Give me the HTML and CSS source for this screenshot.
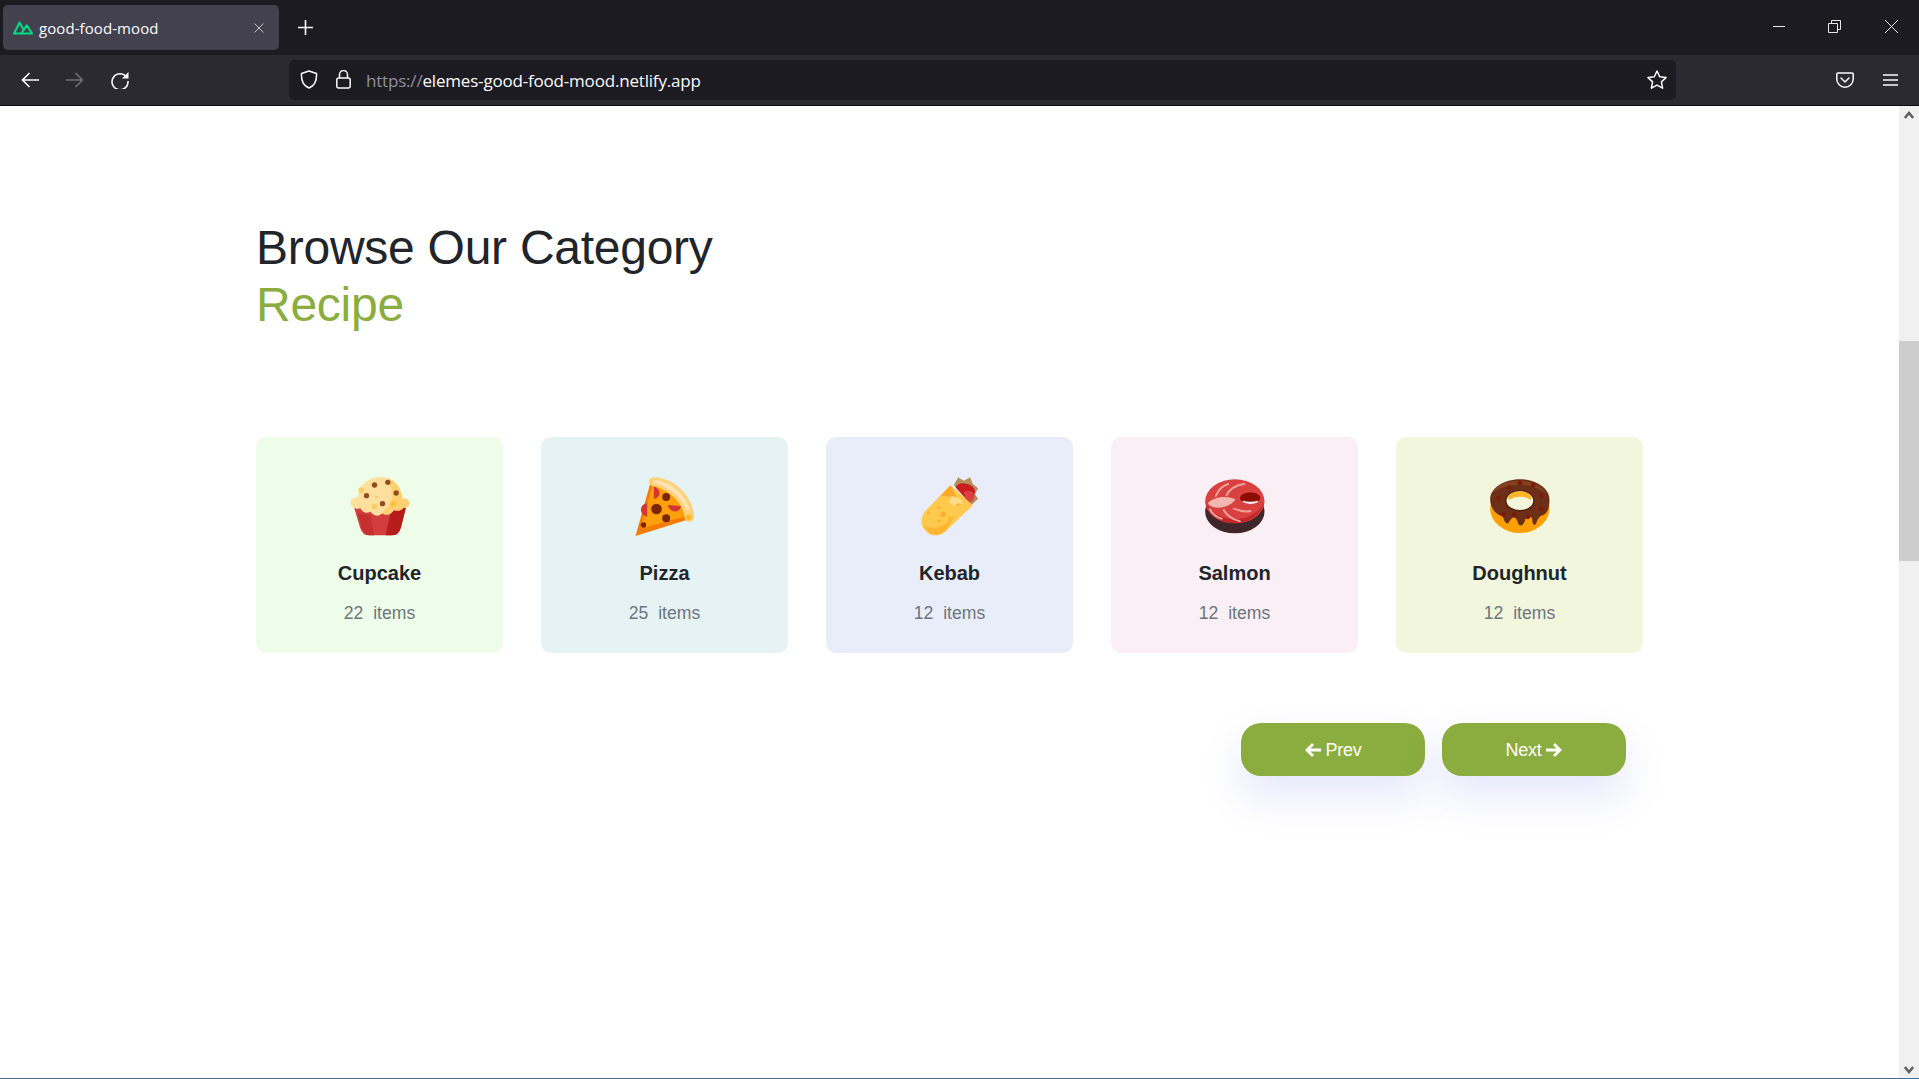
FILE: index.html
```html
<!DOCTYPE html>
<html lang="en">
<head>
<meta charset="utf-8">
<title>good-food-mood</title>
<link rel="stylesheet" href="styles.css">
</head>
<body>
<div class="browser">
  <header class="tabbar">
    <div class="tab">
      <svg class="favicon" viewBox="40 65 58 40" fill="none" stroke="#00dc82" stroke-width="6" stroke-linejoin="round"><path d="M64 101H43L59 69L72 92"/><path d="M64 101L80 77L95 101Z"/></svg>
      <span class="tab-title">good-food-mood</span>
      <svg class="tab-close" viewBox="0 0 10 10" stroke="#c4c4ca" stroke-width="1"><path d="M.5.5l9 9M9.500.5l-9 9"/></svg>
    </div>
    <svg class="newtab" viewBox="0 0 15 15" stroke="#fbfbfe" stroke-width="1.600"><path d="M7.500 0v15M0 7.500h15"/></svg>
    <div class="win-controls">
      <svg class="win-icon" viewBox="0 0 13 13" stroke="#e8e8ea" stroke-width="1"><path d="M0 6.500h12"/></svg>
      <svg class="win-icon" viewBox="0 0 13 13" fill="none" stroke="#e8e8ea" stroke-width="1"><path d="M.5 3.500h9v9h-9zM3.500 3.500v-3h9v9h-3"/></svg>
      <svg class="win-icon" viewBox="0 0 13 13" stroke="#e8e8ea" stroke-width="1"><path d="M0 0l13 13M13 0L0 13"/></svg>
    </div>
  </header>
  <nav class="toolbar">
    <svg class="tool-icon" viewBox="0 0 18 18" fill="none" stroke="#fbfbfe" stroke-width="1.600"><path d="M18 9H1.500M8.500 2L1.500 9l7 7"/></svg>
    <svg class="tool-icon" viewBox="0 0 18 18" fill="none" stroke="#6f6e75" stroke-width="1.600"><path d="M0 9h16.500M9.500 2l7 7-7 7"/></svg>
    <svg class="tool-icon" viewBox="0 0 18 18" fill="none" stroke="#fbfbfe" stroke-width="1.600"><path d="M15.600 6.200A8 8 0 1 0 17 10"/><path d="M17.500 1v6.500H11z" fill="#fbfbfe" stroke="none"/></svg>
    <div class="urlbar">
      <svg class="shield" viewBox="0 0 18 19" fill="none" stroke="#fbfbfe" stroke-width="1.500"><path d="M9 1l7.500 2.500C17 11 14 16 9 18 4 16 1 11 1.500 3.500z" stroke-linejoin="round"/></svg>
      <svg class="lock" viewBox="0 0 15 19" fill="none" stroke="#fbfbfe" stroke-width="1.500"><rect x=".8" y="8" width="13.400" height="10" rx="2"/><path d="M3.500 8V4.500a4 4 0 0 1 8 0V8"/></svg>
      <span class="url"><span class="url-scheme">https://</span>elemes-good-food-mood.netlify.app</span>
      <svg class="star" viewBox="0 0 20 20" fill="none" stroke="#fbfbfe" stroke-width="1.500" stroke-linejoin="round"><path d="M10 1l2.700 5.800 6.300.8-4.600 4.300 1.200 6.300L10 15.100l-5.600 3.100 1.200-6.300L1 7.600l6.300-.8z"/></svg>
    </div>
    <svg class="pocket" viewBox="0 0 18 16" fill="none" stroke="#fbfbfe" stroke-width="1.500" stroke-linejoin="round" stroke-linecap="round"><path d="M2 1h14a1.200 1.200 0 0 1 1.200 1.200V7a8.200 8.200 0 0 1-16.400 0V2.200A1.200 1.200 0 0 1 2 1z"/><path d="M5 6l4 4 4-4"/></svg>
    <svg class="menu" viewBox="0 0 15 12" stroke="#fbfbfe" stroke-width="1.500"><path d="M0 1h15M0 6h15M0 11h15"/></svg>
  </nav>
  <div class="viewport">
    <main class="page">
      <h2 class="title">Browse Our Category<br><span class="title-accent">Recipe</span></h2>
      <section class="cards">
        <article class="card card-cupcake">
          <svg class="food" viewBox="88.500 51 180 180">
            <path d="M100 140H257L241 203Q235 226 213 226H146Q126 226 119 203Z" fill="#d13c3c"/>
            <path d="M195 226H213Q235 226 241 203L257 140H215Z" fill="#b71c1c"/>
            <path d="M150 165L160 226H146Q130 226 122 195L112 160Z" fill="#c62f2f"/>
            <path d="M112 112C116 72 146 51 180 51C218 51 242 78 246 116C258 114 268 122 267 130C266 142 255 146 248 143C242 155 228 152 220 150C212 165 195 168 185 160C175 172 160 168 150 155C140 162 125 158 120 145C105 150 90 140 90 128C91 118 100 112 112 112Z" fill="#ffdf9e"/>
            <path d="M200 54C228 62 243 85 246 116C258 114 268 122 267 130C266 142 255 146 248 143C242 155 228 152 220 150C212 165 195 168 185 160L195 145C215 135 225 100 200 54Z" fill="#ffd070"/>
            <circle cx="162" cy="75" r="8" fill="#944b20"/><circle cx="202" cy="67" r="8" fill="#944b20"/><circle cx="227" cy="99" r="8" fill="#944b20"/><circle cx="138" cy="107" r="8" fill="#944b20"/><circle cx="186" cy="131" r="8" fill="#944b20"/>
            <circle cx="122" cy="90" r="8" fill="#ffc95c"/><circle cx="162" cy="140" r="8" fill="#ffc95c"/><circle cx="218" cy="131" r="8" fill="#ffc030"/><circle cx="167" cy="111" r="4" fill="#ffc95c"/>
          </svg>
          <h3 class="card-name">Cupcake</h3>
          <p class="card-count">22 &nbsp;items</p>
        </article>
        <article class="card card-pizza">
          <svg class="food" viewBox="73.500 51 180 180">
            <path d="M75 228L120 68C175 75 225 120 240 176Z" fill="#f57c00"/>
            <path d="M90 206L126 76C175 85 215 122 226 168L214 172Z" fill="#ff9f0a"/>
            <path d="M134 52C190 55 245 105 251 168C251 192 222 192 222 168C215 125 170 85 126 78C108 72 114 50 134 52Z" fill="#ffd27a"/>
            <path d="M132 60C182 64 230 108 238 154L228 150C214 112 172 78 130 70Z" fill="#ffe3b5"/>
            <circle cx="235" cy="172" r="8" fill="#ffb42a"/>
            <path d="M130 80C150 84 155 112 130 116Z" fill="#d33636"/>
            <path d="M110 130C85 134 85 164 110 170Z" fill="#d33636"/>
            <path d="M172 135C178 160 208 160 212 138Z" fill="#d33636"/>
            <circle cx="138" cy="147" r="16" fill="#7a2600"/><circle cx="167" cy="111" r="12" fill="#7a2600"/><circle cx="167" cy="175" r="12" fill="#7a2600"/><circle cx="99" cy="195" r="8" fill="#7a2600"/>
          </svg>
          <h3 class="card-name">Pizza</h3>
          <p class="card-count">25 &nbsp;items</p>
        </article>
        <article class="card card-kebab">
          <svg class="food" viewBox="73.500 51 180 180">
            <path d="M175 75L188 52L205 62L224 52L232 72L248 85L238 103L248 116L228 135Z" fill="#b58f5c"/>
            <path d="M180 82C190 65 205 70 215 72C230 75 245 90 236 105C238 115 232 122 222 128Z" fill="#c91f1f"/>
            <path d="M205 95C222 90 235 95 236 105C238 115 232 122 222 128L210 118Z" fill="#d94040"/>
            <path d="M165 76L232 136L150 214C130 232 104 230 88 210C72 192 76 166 92 150Z" fill="#ffc94d"/>
            <path d="M135 108L165 76L182 110Z" fill="#ffa726"/>
            <path d="M160 125L170 108L195 118L205 132L185 128L178 140Z" fill="#ffdc8a"/>
            <path d="M120 222C104 228 90 210 84 195C105 208 130 205 150 190L180 165L150 214C140 222 130 226 120 222Z" fill="#ffb733"/>
            <circle cx="143" cy="163" r="8" fill="#ffad29"/><circle cx="131" cy="143" r="4" fill="#ffad29"/><circle cx="99" cy="158" r="4" fill="#ffad29"/><circle cx="131" cy="183" r="4" fill="#ffad29"/><circle cx="163" cy="175" r="4" fill="#ffad29"/><circle cx="187" cy="135" r="4" fill="#ffad29"/>
          </svg>
          <h3 class="card-name">Kebab</h3>
          <p class="card-count">12 &nbsp;items</p>
        </article>
        <article class="card card-salmon">
          <svg class="food" viewBox="73.500 51 180 180">
            <ellipse cx="163" cy="155" rx="89" ry="65" fill="#3f2628"/>
            <ellipse cx="163" cy="124" rx="89" ry="66" fill="#d94040"/>
            <path d="M74 125C90 170 130 190 163 190C205 190 240 165 252 125C240 155 205 178 163 178C125 178 90 155 74 125Z" fill="#c42626"/>
            <g fill="none" stroke="#eea09b" stroke-width="6" stroke-linecap="round">
              <path d="M106 108C112 92 125 78 143 72"/>
              <path d="M138 106C145 90 165 74 192 72"/>
              <path d="M88 148C95 160 108 172 124 176"/>
              <path d="M130 150C138 165 155 178 178 184"/>
              <path d="M160 146C175 152 190 158 210 153"/>
            </g>
            <path d="M82 130C100 112 130 105 165 118C155 135 125 148 100 142C92 140 85 136 82 130Z" fill="#f2b8b0"/>
            <ellipse cx="209" cy="112" rx="36" ry="20" fill="#e64545"/>
            <ellipse cx="209" cy="114" rx="31" ry="17" fill="#8b0e00"/>
            <path d="M187 124C198 132 220 132 232 124C220 128 198 128 187 124Z" fill="#f9eff4" stroke="#f9eff4" stroke-width="4"/>
          </svg>
          <h3 class="card-name">Salmon</h3>
          <p class="card-count">12 &nbsp;items</p>
        </article>
        <article class="card card-doughnut">
          <svg class="food" viewBox="73.500 51 180 180">
            <ellipse cx="163" cy="146" rx="89" ry="73" fill="#ffa000"/>
            <path d="M74 118C74 85 115 58 163 58C212 58 252 85 252 118C252 145 246 160 232 166C222 168 218 175 212 190C207 200 200 194 200 176C195 166 185 168 180 176C175 198 160 205 156 184C150 168 140 170 132 184C125 198 118 188 112 170C95 165 74 148 74 118Z" fill="#6e2f18"/>
            <path d="M80 100C95 72 130 62 163 62C200 62 232 80 245 103C215 82 190 74 163 74C130 74 100 84 80 100Z" fill="#84421f"/>
            <ellipse cx="163" cy="122" rx="44" ry="32" fill="#4f1e0c"/>
            <ellipse cx="163" cy="122" rx="40" ry="28" fill="#f1f6dc"/>
            <path d="M128 108C136 98 150 94 163 94C176 94 190 98 198 108C199 114 197 118 195 120C185 112 175 110 163 110C151 110 141 112 131 120C129 118 127 114 128 108Z" fill="#ffb428"/>
            <g fill="#7c1b08"><circle cx="131" cy="83" r="7"/><circle cx="163" cy="68" r="7"/><circle cx="203" cy="75" r="7"/><circle cx="99" cy="115" r="7"/><circle cx="227" cy="107" r="7"/><circle cx="115" cy="163" r="7"/><circle cx="147" cy="163" r="7"/><circle cx="187" cy="171" r="7"/><circle cx="227" cy="147" r="7"/></g>
          </svg>
          <h3 class="card-name">Doughnut</h3>
          <p class="card-count">12 &nbsp;items</p>
        </article>
      </section>
      <div class="pager">
        <button class="pager-btn" type="button"><svg class="pager-arrow" viewBox="0 0 16 14" fill="none" stroke="#fff" stroke-width="2.800"><path d="M16 7H2M8 1L2 7l6 6"/></svg> Prev</button>
        <button class="pager-btn" type="button">Next <svg class="pager-arrow" viewBox="0 0 16 14" fill="none" stroke="#fff" stroke-width="2.800"><path d="M0 7h14M8 1l6 6-6 6"/></svg></button>
      </div>
    </main>
    <aside class="scrollbar">
      <svg class="scroll-arrow" viewBox="0 0 10 8" fill="none" stroke="#606060" stroke-width="2.600"><path d="M.8 7L5 2l4.200 5"/></svg>
      <div class="scroll-thumb"></div>
      <svg class="scroll-arrow scroll-arrow-down" viewBox="0 0 10 8" fill="none" stroke="#606060" stroke-width="2.600"><path d="M.8 1L5 6l4.200-5"/></svg>
    </aside>
  </div>
</div>
</body>
</html>
```
FILE: styles.css
```css
* { box-sizing: border-box; }
html, body { margin: 0; height: 100%; overflow: hidden; background: #fff; }
body { font-family: "Liberation Sans", Arial, sans-serif; }
.browser { display: flex; flex-direction: column; height: 1079px; border-bottom: 1px solid #3d6f96; }

.tabbar { flex: 0 0 55px; display: flex; align-items: flex-start; background: #1c1b22; padding: 5px 0 0 3px; }
.tab { width: 276px; height: 45px; display: flex; align-items: center; padding: 0 15px 0 10px; border-radius: 5px; background: #42414d; color: #fbfbfe; }
.favicon { width: 20px; height: 14px; flex: none; }
.tab-title { margin-left: 6px; font: 15px/20px "Open Sans", sans-serif; letter-spacing: .08px; flex: 1; }
.tab-close { width: 10px; height: 10px; flex: none; }
.newtab { width: 15px; height: 15px; margin: 15px 0 0 19px; }
.win-controls { margin: 15px 21px 0 auto; display: flex; gap: 44px; }
.win-icon { width: 13px; height: 13px; }
.win-icon:first-child { margin-right: -1px; transform: translateX(1px); }

.toolbar { flex: 0 0 51px; display: flex; align-items: center; gap: 27px; padding: 0 21px 1px 21px; background: #2b2a33; border-bottom: 1px solid #0c0c0d; }
.tool-icon { width: 18px; height: 18px; flex: none; }
.urlbar { width: 1387px; height: 40px; margin-left: 133px; display: flex; align-items: center; padding: 0 9px 0 11px; border-radius: 5px; background: #1c1b22; flex: none; }
.shield { width: 18px; height: 19px; flex: none; }
.lock { width: 15px; height: 19px; margin-left: 18px; flex: none; }
.url { margin: 3px 0 0 15px; flex: 1; color: #fbfbfe; font: 17px/22px "Open Sans", sans-serif; letter-spacing: -.19px; }
.url-scheme { color: #8f8f9d; }
.star { width: 20px; height: 20px; flex: none; }
.pocket { width: 18px; height: 16px; margin-left: 133px; flex: none; }
.menu { width: 15px; height: 12px; margin-left: 2px; flex: none; }

.viewport { flex: 1; display: flex; min-height: 0; }
.page { flex: 1; padding: 113px 256px 0; min-width: 0; }
.title { margin: 0 0 104px; font-size: 48px; line-height: 57px; font-weight: 400; letter-spacing: -.26px; color: #212529; white-space: nowrap; }
.title-accent { color: #8bac3e; }

.cards { display: flex; gap: 38px; width: 1387px; }
.card { width: 247px; height: 216px; padding-top: 40px; border-radius: 10px; text-align: center; flex: none; }
.card-cupcake { background: #eefde9; }
.card-pizza { background: #e5f3f5; }
.card-kebab { background: #e9edf9; }
.card-salmon { background: #f9eff4; }
.card-doughnut { background: #f1f6dc; }
.food { display: block; width: 60px; height: 60px; margin: 0 auto; }
.card-name { margin: 24px 0 0; font-size: 20px; line-height: 24px; font-weight: 700; color: #212529; }
.card-count { margin: 16px 0 0; font-size: 17.600px; line-height: 24px; color: #6c757d; }

.pager { display: flex; justify-content: flex-end; gap: 17px; width: 1370px; margin-top: 70px; }
.pager-btn { width: 184px; height: 53px; display: flex; align-items: center; justify-content: center; gap: 5px; border: 0; border-radius: 20px; background: #8bac3e; color: #fff; font: 18px/24px "Liberation Sans", sans-serif; letter-spacing: -.3px; box-shadow: 0 20px 40px rgba(110, 120, 230, .18); }
.pager-arrow { width: 16px; height: 14px; }

.scrollbar { flex: 0 0 20px; position: relative; background: #f0f0f0; }
.scroll-arrow { position: absolute; left: 5px; top: 5px; width: 10px; height: 8px; }
.scroll-arrow-down { top: auto; bottom: 4px; }
.scroll-thumb { position: absolute; left: 0; right: 0; top: 235px; height: 220px; background: #cdcdcd; }
```
